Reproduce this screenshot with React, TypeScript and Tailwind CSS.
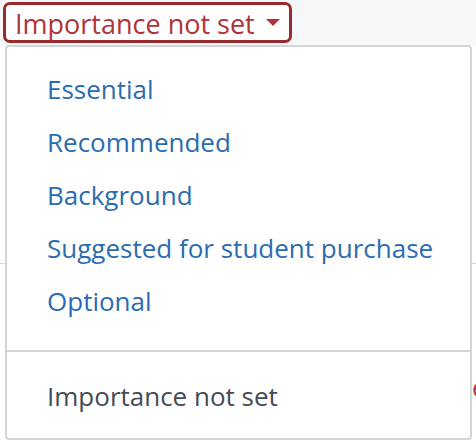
import React from "react";

const items = ["Essential", "Recommended", "Background", "Suggested for student purchase", "Optional"];

export default function App() {
  return (
    <div className="relative w-[476px] h-[440px] overflow-hidden bg-white font-['Open_Sans',sans-serif]">
      {/* page header strip */}
      <div className="h-[46px] bg-[#f6f7f9] pl-[3px] pt-[2px]">
        <button className="flex h-[41px] w-[289px] items-center rounded-[7px] border-[3px] border-[#9b2a2e] bg-white pl-[9px] pt-[2px] text-[27px] leading-none text-[#b0333a]">
          <span>Importance not set</span>
          <span className="ml-[11px] mb-[2px] h-0 w-0 border-x-[7px] border-t-[7px] border-x-transparent border-t-[#b0333a]" />
        </button>
      </div>

      {/* underlying page */}
      <div className="mt-[217px] h-px bg-[#d5d7db]" />
      <div className="ml-[472px] mt-[111px] text-[25px] leading-none text-[#b0333a]">e</div>

      {/* dropdown menu */}
      <div className="absolute left-[5px] top-[45px] flex h-[395px] w-[467px] flex-col rounded-[4px] border-2 border-[#d2d4d8] bg-white">
        <ul className="pt-[16px]">
          {items.map((t) => (
            <li key={t} className="flex h-[53px] items-center pl-[40px] text-[26px] text-[#2b6cb0]">
              {t}
            </li>
          ))}
        </ul>
        <div className="mt-[22px] h-[2px] bg-[#d2d4d8]" />
        <div className="flex h-[87px] items-center pl-[40px] pt-[4px] text-[26px] text-[#454b54]">Importance not set</div>
      </div>
    </div>
  );
}
